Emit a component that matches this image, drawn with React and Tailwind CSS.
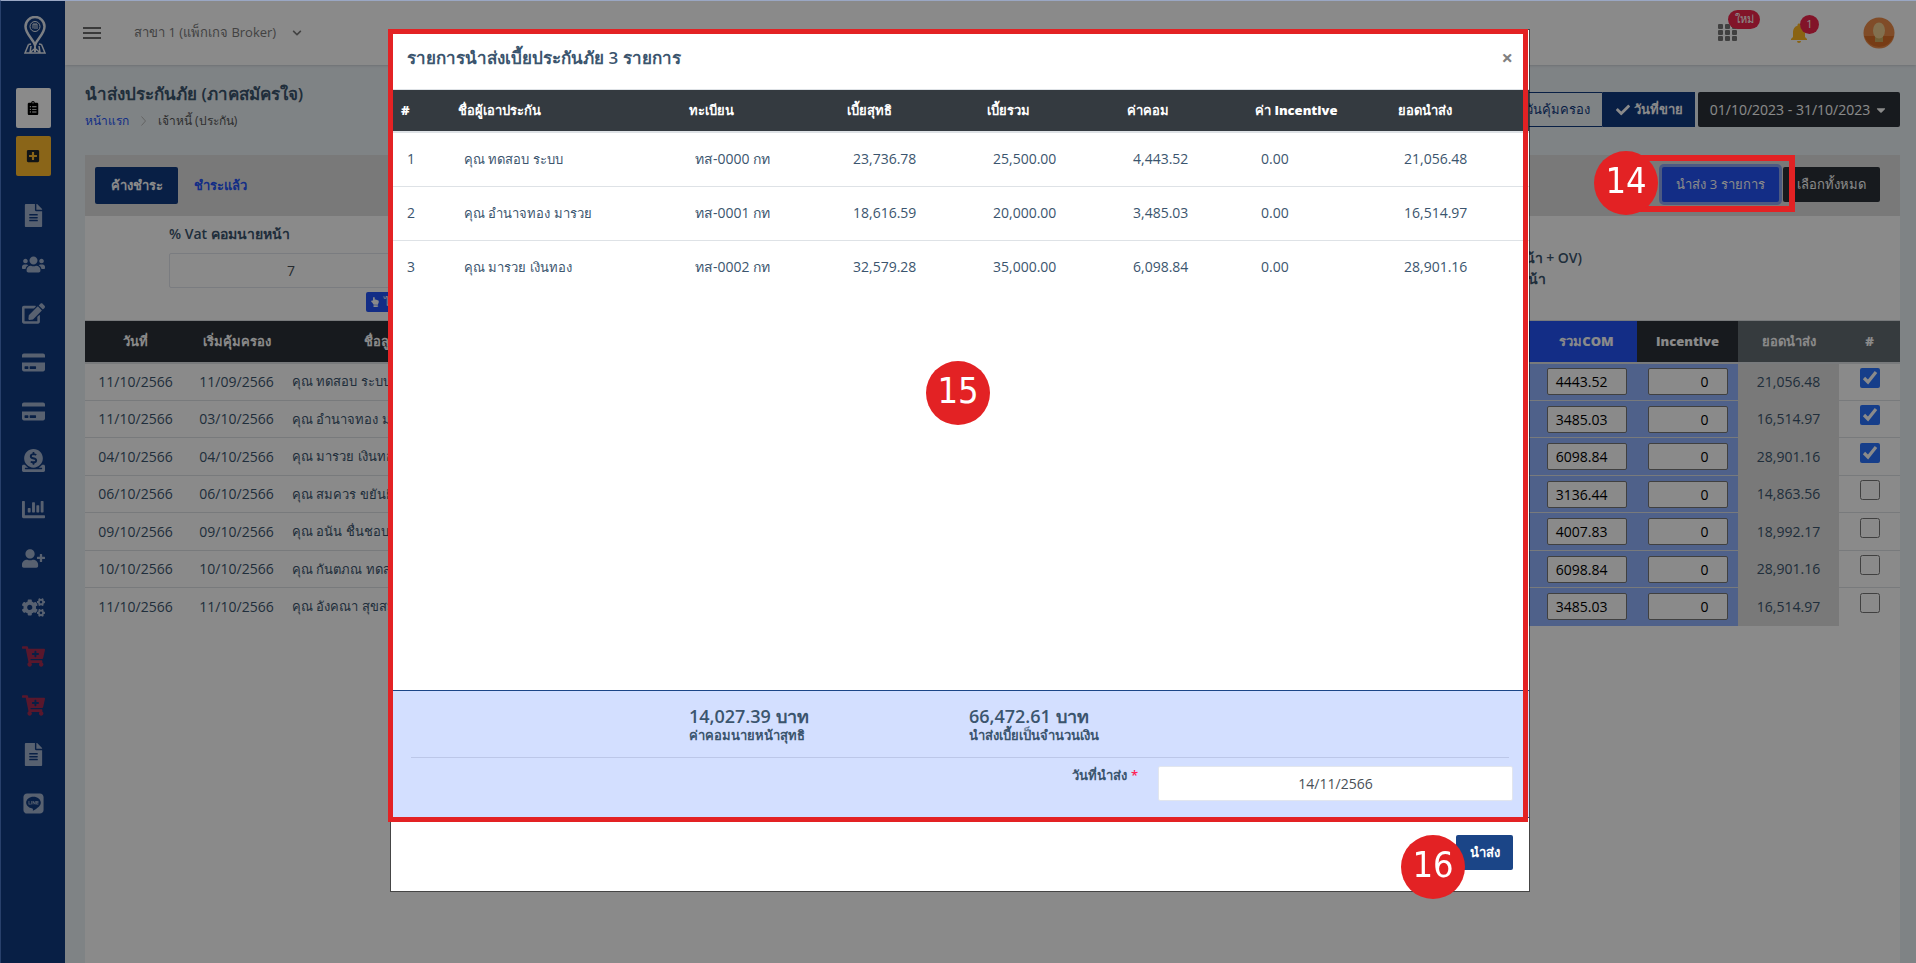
import { useState } from 'react';
import {
  FaCaretDown,
  FaCartPlus,
  FaChartBar,
  FaCheck,
  FaChevronDown,
  FaClipboardList,
  FaCogs,
  FaCreditCard,
  FaDonate,
  FaEdit,
  FaFileAlt,
  FaHandPointUp,
  FaLine,
  FaPlusSquare,
  FaUserPlus,
  FaUsers
} from 'react-icons/fa';
import { MdNotifications } from 'react-icons/md';

const menu = [
  { label: 'เอกสาร', Icon: FaFileAlt },
  { label: 'ลูกค้า', Icon: FaUsers },
  { label: 'แจ้งงาน', Icon: FaEdit },
  { label: 'ลูกหนี้', Icon: FaCreditCard },
  { label: 'เจ้าหนี้', Icon: FaCreditCard },
  { label: 'การเงิน', Icon: FaDonate },
  { label: 'รายงาน', Icon: FaChartBar },
  { label: 'ตัวแทน', Icon: FaUserPlus },
  { label: 'ตั้งค่า', Icon: FaCogs },
  { label: 'ซื้อแพ็กเกจ', Icon: FaCartPlus, hot: true },
  { label: 'ซื้อเพิ่ม', Icon: FaCartPlus, hot: true },
  { label: 'คู่มือ', Icon: FaFileAlt },
  { label: 'LINE', Icon: FaLine }
];

const policies = [
  { id: 1, date: '11/10/2566', start: '11/09/2566', name: 'คุณ ทดสอบ ระบบ', plate: 'ทส-0000 กท', net: 23736.78, com: 4443.52, pay: 21056.48 },
  { id: 2, date: '11/10/2566', start: '03/10/2566', name: 'คุณ อำนาจทอง มารวย', plate: 'ทส-0001 กท', net: 18616.59, com: 3485.03, pay: 16514.97 },
  { id: 3, date: '04/10/2566', start: '04/10/2566', name: 'คุณ มารวย เงินทอง', plate: 'ทส-0002 กท', net: 32579.28, com: 6098.84, pay: 28901.16 },
  { id: 4, date: '06/10/2566', start: '06/10/2566', name: 'คุณ สมควร ขยันยิ่ง', com: 3136.44, pay: 14863.56 },
  { id: 5, date: '09/10/2566', start: '09/10/2566', name: 'คุณ อนัน ชื่นชอบ', com: 4007.83, pay: 18992.17 },
  { id: 6, date: '10/10/2566', start: '10/10/2566', name: 'คุณ กันตภณ ทดสอบ', com: 6098.84, pay: 28901.16 },
  { id: 7, date: '11/10/2566', start: '11/10/2566', name: 'คุณ อังคณา สุขสม', com: 3485.03, pay: 16514.97 }
];

const money = (n) => (n || 0).toLocaleString('en-US', { minimumFractionDigits: 2, maximumFractionDigits: 2 });

function Logo() {
  return (
    <svg viewBox="0 0 44 76" className="h-[38px] w-[22px]" fill="none" stroke="#e6ebf2">
      <path d="M22 58 C18 46 3 36 3 21 A19 19 0 0 1 41 21 C41 36 26 46 22 58 Z" strokeWidth="5" />
      <circle cx="22" cy="21" r="10" strokeWidth="2" />
      <path d="M18 16 h4 v10 M22 16 h4 v10 M18 16 v9" strokeWidth="2" />
      <path d="M9 57 L2 74 H42 L35 57 M9 57 l5 -1 M35 57 l-5 -1 M14 60 l-2 13 M30 60 l2 13 M12 73 l10 -8 l10 8" strokeWidth="3" />
      <path d="M22 61 v11" strokeWidth="4" />
    </svg>
  );
}

function Avatar() {
  return (
    <svg viewBox="0 0 32 32" className="size-8">
      <circle cx="16" cy="16" r="15.5" fill="#ec8c4a" />
      <path d="M1.2 19 H30.8 A15.5 15.5 0 0 1 1.2 19 Z" fill="#dd6f28" />
      <path d="M12 17 h8 v8 h-8 Z" fill="#cfae62" />
      <ellipse cx="16" cy="13.5" rx="6" ry="8" fill="#f0d093" />
    </svg>
  );
}

function Step({ n, className }) {
  return (
    <span
      className={`absolute z-50 flex size-16 items-center justify-center rounded-full bg-[#e32224] pb-1 font-['DejaVu_Sans_Condensed','DejaVu_Sans',sans-serif] text-[36px] leading-none text-white ${className}`}
    >
      {n}
    </span>
  );
}

function Sidebar() {
  return (
    <aside className="flex w-[65px] shrink-0 flex-col items-center bg-[#103a80] pl-px">
      <a href="#home" aria-label="หน้าแรก" className="flex h-[65px] items-center pt-1 pl-1">
        <Logo />
      </a>
      <button aria-label="งาน" className="mt-[23px] flex h-10 w-[35px] items-center justify-center rounded-xs bg-white text-black">
        <FaClipboardList className="h-[14px] w-auto" />
      </button>
      <button aria-label="เพิ่ม" className="mt-2 mb-[15px] flex h-10 w-[35px] items-center justify-center rounded-xs bg-[#ffbb2e] text-[#212529]">
        <FaPlusSquare className="h-[14px] w-auto" />
      </button>
      {menu.map(({ label, Icon, hot }) => (
        <a
          key={label}
          href="#menu"
          aria-label={label}
          className={`flex h-[49px] items-center ${hot ? 'text-[#a52c52]' : 'text-[#a3b4d0]'}`}
        >
          <Icon className="h-[23px] w-auto" />
        </a>
      ))}
    </aside>
  );
}

function Topbar() {
  return (
    <header className="flex h-[65px] items-center bg-white pr-[21px] pl-[18px] shadow-sm">
      <button aria-label="เมนู">
        <svg viewBox="0 0 18 12" className="h-3 w-[18px]" fill="#6b6b6b">
          <path d="M0 0h18v2H0zM0 5h18v2H0zM0 10h18v2H0z" />
        </svg>
      </button>
      <button className="ml-[33px] flex items-center gap-4 text-[13px] text-[#7b7b7b]">
        สาขา 1 (แพ็กเกจ Broker)
        <FaChevronDown className="size-[10px]" />
      </button>
      <div className="ml-auto flex items-center">
        <button aria-label="แอป" className="relative">
          <svg viewBox="0 0 19 17" className="h-[17px] w-[19px]" fill="#777">
            {[0, 7, 14].map((x) => [0, 6, 12].map((y) => <rect key={`${x}-${y}`} x={x} y={y} width="5" height="5" rx="1" />))}
          </svg>
          <span className="absolute -top-[14px] left-[10px] flex h-[19px] w-8 items-center justify-center rounded-full bg-[#f0264c] text-[11px] text-white">
            ใหม่
          </span>
        </button>
        <button aria-label="แจ้งเตือน" className="relative ml-[50px] text-[#ffb822]">
          <MdNotifications className="size-6" />
          <span className="absolute -top-[6px] left-[13px] flex size-[19px] items-center justify-center rounded-full bg-[#f0264c] text-[11px] text-white">
            1
          </span>
        </button>
        <button aria-label="บัญชี" className="ml-[52px]">
          <Avatar />
        </button>
      </div>
    </header>
  );
}

function PolicyTable({ selected, toggle }) {
  const th = 'border-b-2 border-[#dee2e6] text-[13px] font-extrabold text-white';
  return (
    <table className="w-full table-fixed border-collapse border-t border-[#dee2e6] text-center text-sm text-[#3b556e]">
      <thead>
        <tr className="h-[42px] bg-[#2b3138]">
          <th className={`w-[101px] ${th}`}>วันที่</th>
          <th className={`w-[101px] ${th}`}>เริ่มคุ้มครอง</th>
          <th className={`w-[202px] ${th}`}>ชื่อลูกค้า</th>
          <th className={`text-left ${th}`}>เบี้ยรวม</th>
          <th className={`w-[101px] bg-[#2454f7] ${th}`}>COM</th>
          <th className={`w-[101px] bg-[#2454f7] ${th}`}>รวมCOM</th>
          <th className={`w-[101px] ${th}`}>Incentive</th>
          <th className={`w-[101px] bg-[#656d73] ${th}`}>ยอดนำส่ง</th>
          <th className={`w-[61px] bg-[#656d73] ${th}`}>#</th>
        </tr>
      </thead>
      <tbody>
        {policies.map((p) => (
          <tr key={p.id} className="odd:h-[38px] even:h-[37px] not-last:border-b not-last:border-[#dee2e6]">
            <td>{p.date}</td>
            <td>{p.start}</td>
            <td className="pl-[5px] text-left text-[13px] whitespace-nowrap">{p.name}</td>
            <td className="text-left">{money(p.com + p.pay)}</td>
            <td className="bg-[#92b3ff]">{p.com}</td>
            <td className="bg-[#92b3ff]">
              <input
                aria-label={`รวมCOM ${p.name}`}
                defaultValue={p.com}
                className="mx-auto block h-[27px] w-20 rounded-xs border border-[#767676] bg-white pr-[18px] text-right text-black"
              />
            </td>
            <td className="bg-[#92b3ff]">
              <input
                aria-label={`Incentive ${p.name}`}
                defaultValue="0"
                className="mx-auto block h-[27px] w-20 rounded-xs border border-[#767676] bg-white pr-[18px] text-right text-black"
              />
            </td>
            <td className="border-b border-[#dfdfdf] bg-[#dfdfdf]">{money(p.pay)}</td>
            <td>
              <input
                type="checkbox"
                aria-label={p.name}
                checked={selected.includes(p.id)}
                onChange={() => toggle(p.id)}
                className="mx-auto mb-2 block size-5 accent-[#2a74ff]"
              />
            </td>
          </tr>
        ))}
      </tbody>
    </table>
  );
}

function PaymentModal({ items }) {
  const th = 'pl-[10px] font-extrabold';
  const td = 'pl-4';
  const com = items.reduce((sum, p) => sum + p.com, 0);
  const pay = items.reduce((sum, p) => sum + p.pay, 0);

  return (
    <div className="fixed inset-0 z-50 flex items-start justify-center pt-[29px] pl-1">
      <div role="dialog" aria-labelledby="modal-title" className="relative w-[1140px] max-w-full border border-black/50 bg-white bg-clip-padding">
        <div className="flex h-[60px] items-center justify-between border-b border-[#dee2e6] pr-4 pb-1 pl-4">
          <h2 id="modal-title" className="text-[17px] font-semibold text-[#3b556e]">
            รายการนำส่งเบี้ยประกันภัย {items.length} รายการ
          </h2>
          <button aria-label="ปิด" className="text-xl font-bold text-[#808080]">
            ×
          </button>
        </div>

        <div className="h-[600px] overflow-hidden">
          <table className="w-full table-fixed border-collapse text-left text-sm text-[#3b556e]">
            <thead>
              <tr className="h-[42px] border-b-2 border-[#dee2e6] bg-[#343a40] text-[13px] text-white">
                <th className={`w-[57px] ${th}`}>#</th>
                <th className={`w-[231px] ${th}`}>ชื่อผู้เอาประกัน</th>
                <th className={`w-[158px] ${th}`}>ทะเบียน</th>
                <th className={`w-[140px] ${th}`}>เบี้ยสุทธิ</th>
                <th className={`w-[140px] ${th}`}>เบี้ยรวม</th>
                <th className={`w-[128px] ${th}`}>ค่าคอม</th>
                <th className={`w-[143px] ${th}`}>ค่า Incentive</th>
                <th className={th}>ยอดนำส่ง</th>
              </tr>
            </thead>
            <tbody>
              {items.map((p) => (
                <tr key={p.id} className="h-[54px] not-last:border-b not-last:border-[#dee2e6]">
                  <td className={td}>{p.id}</td>
                  <td className={`text-[13px] ${td}`}>{p.name}</td>
                  <td className={td}>{p.plate}</td>
                  <td className={td}>{money(p.net)}</td>
                  <td className={td}>{money(p.com + p.pay)}</td>
                  <td className={td}>{money(p.com)}</td>
                  <td className={td}>0.00</td>
                  <td className={td}>{money(p.pay)}</td>
                </tr>
              ))}
            </tbody>
          </table>
        </div>

        <div className="border-y border-[#1b4587] bg-[#d3dfff] pb-4 text-[#3b556e]">
          <div className="grid grid-cols-4 pt-[15px] pb-[13px] pl-[18px] font-semibold">
            <div className="col-start-2">
              <div className="text-lg leading-5">{money(com)} บาท</div>
              <div className="text-[13px] leading-[18px]">ค่าคอมนายหน้าสุทธิ</div>
            </div>
            <div>
              <div className="text-lg leading-5">{money(pay)} บาท</div>
              <div className="text-[13px] leading-[18px]">นำส่งเบี้ยเป็นจำนวนเงิน</div>
            </div>
          </div>
          <hr className="mx-5 border-[#bcc7e8]" />
          <div className="mt-2 flex justify-end gap-5 pr-4">
            <label htmlFor="pay-date" className="text-[13px] font-semibold">
              วันที่นำส่ง <span className="text-[#ff2255]">*</span>
            </label>
            <input
              id="pay-date"
              defaultValue="14/11/2566"
              className="h-[35px] w-[355px] rounded-xs border border-[#e2e6ee] bg-white text-center text-sm text-[#495057]"
            />
          </div>
        </div>

        <div className="relative flex h-[73px] items-start justify-end pt-[17px] pr-4">
          <button className="h-[35px] w-[57px] rounded-xs bg-[#1b4587] text-[13px] font-semibold text-white">นำส่ง</button>
          <Step n="16" className="top-[17px] right-[64px]" />
        </div>

        <div className="pointer-events-none absolute -top-px -left-[3px] h-[793px] w-[1140px] border-[5px] border-[#e32224]" />
        <Step n="15" className="top-[331px] left-[535px]" />
      </div>
    </div>
  );
}

export default function App() {
  const [selected, setSelected] = useState([1, 2, 3]);
  const items = policies.filter((p) => selected.includes(p.id));

  const toggle = (id) => {
    setSelected((prev) => (prev.includes(id) ? prev.filter((x) => x !== id) : [...prev, id]));
  };

  return (
    <div className="flex min-h-screen bg-[#ebf2f6] font-['Open_Sans','Noto_Sans',sans-serif] text-[#3b556e]">
      <Sidebar />
      <div className="flex min-w-0 flex-1 flex-col">
        <Topbar />
        <main className="flex flex-1 flex-col pr-4 pl-5">
          <div className="flex h-[90px] items-start justify-between">
            <div className="pt-4">
              <h1 className="text-[17px] leading-[26px] font-semibold">นำส่งประกันภัย (ภาคสมัครใจ)</h1>
              <nav className="flex items-center gap-3 text-xs leading-7">
                <a href="#home" className="text-[#2454f7]">หน้าแรก</a>
                <svg viewBox="0 0 5 10" className="h-[10px] w-[5px]" fill="none" stroke="#b8b8b8">
                  <path d="M0.5 0.5 L4.5 5 L0.5 9.5" />
                </svg>
                <span className="text-[#555]">เจ้าหนี้ (ประกัน)</span>
              </nav>
            </div>
            <div className="flex pt-[27px] text-[13px]">
              <button className="h-[35px] rounded-l-xs border border-[#103a80] px-3 text-[#103a80]">วันคุ้มครอง</button>
              <button className="flex h-[35px] w-[92px] items-center justify-center gap-1 bg-[#103a80] font-semibold text-white">
                <FaCheck className="size-[14px]" /> วันที่ขาย
              </button>
              <button className="ml-[3px] flex h-[35px] w-[202px] items-center justify-center gap-1 rounded-xs bg-[#2b3138] text-sm text-white">
                01/10/2023 - 31/10/2023 <FaCaretDown className="size-[14px]" />
              </button>
            </div>
          </div>

          <section className="flex-1 bg-white">
            <div className="flex h-[61px] items-start bg-[#e0e0e0] px-[10px] pt-3 text-[13px]">
              <button className="h-[37px] w-[83px] rounded-xs bg-[#103a80] font-semibold text-white">ค้างชำระ</button>
              <button className="ml-4 h-[37px] font-semibold text-[#2454f7]">ชำระแล้ว</button>
              <div className="relative mr-[10px] ml-auto flex gap-1">
                <button className="h-[35px] w-[117px] rounded-xs bg-[#2454f7] text-white ring-3 ring-[#8ca6f0]">
                  นำส่ง {items.length} รายการ
                </button>
                <button className="h-[35px] w-[97px] rounded-xs bg-[#2b3138] text-white">เลือกทั้งหมด</button>
                <div className="absolute -top-3 -left-6 z-50 h-[57px] w-[157px] border-[6px] border-[#e32224]" />
                <Step n="14" className="-top-4 -left-[68px]" />
              </div>
            </div>

            <div className="flex h-[104px] justify-between pr-[318px] pl-[84px]">
              <div className="flex w-[244px] flex-col items-end">
                <label htmlFor="vat" className="mt-2 mb-[9px] w-full text-sm leading-5 font-semibold">
                  % Vat คอมนายหน้า
                </label>
                <input
                  id="vat"
                  defaultValue="7"
                  className="h-[35px] w-full rounded-xs border border-[#e2e5ec] bg-white text-center text-sm text-[#495057]"
                />
                <button className="mt-1 flex h-5 w-[47px] items-center gap-1 rounded-xs bg-[#2454f7] px-1 text-[11px] whitespace-nowrap text-white">
                  <FaHandPointUp className="size-[10px] shrink-0" /> ไม่ใช้
                </button>
              </div>
              <div className="pt-[31px] text-sm leading-[21px] font-semibold">
                <div>(คอมนายหน้า + OV)</div>
                <div>- คอมนายหน้า</div>
              </div>
            </div>

            <PolicyTable selected={selected} toggle={toggle} />
          </section>
        </main>
      </div>

      <div className="fixed inset-0 z-40 border-t border-l border-t-[#9aa7c4] border-l-[#28406b] bg-black/46" />
      <PaymentModal items={items} />
    </div>
  );
}
